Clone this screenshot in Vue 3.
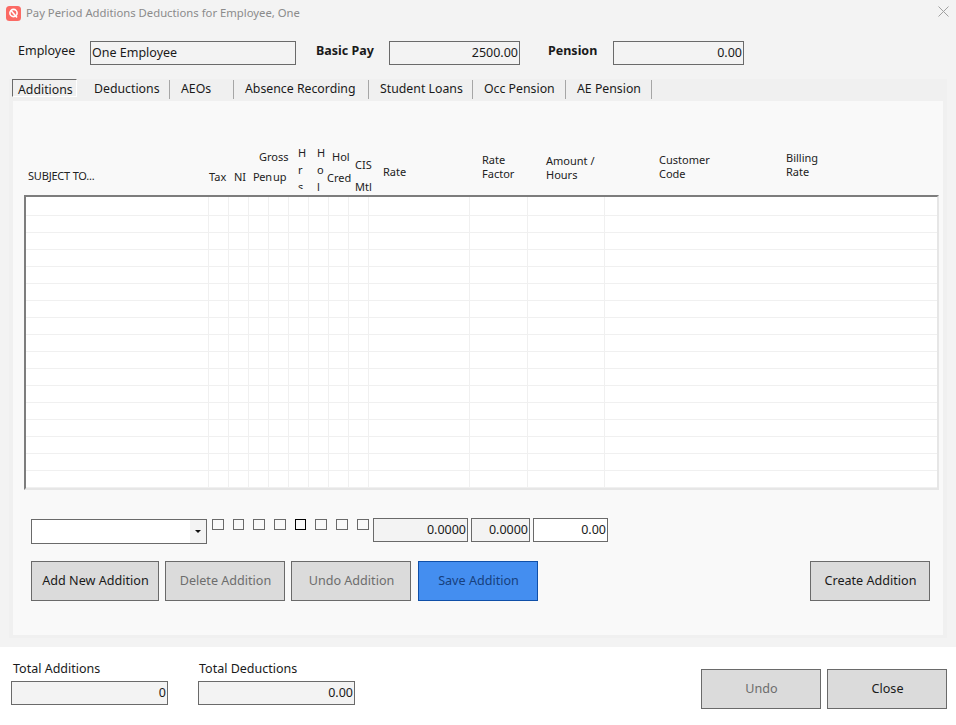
<template>
  <div class="window">
    <div class="upper">
      <div class="titlebar">
        <svg class="logo" viewBox="0 0 15 15" width="15" height="15">
          <rect width="15" height="15" rx="3.5" fill="#fb6a64" />
          <circle cx="7.5" cy="7" r="3.6" fill="none" stroke="#fff" stroke-width="1.6" />
          <path d="M4.8 4.2 L11 11.6" stroke="#fff" stroke-width="1.6" />
        </svg>
        <span class="title">Pay Period Additions Deductions for Employee, One</span>
        <svg class="close-x" viewBox="0 0 11 11" width="11" height="11">
          <path d="M0.5 0.5 L10.5 10.5 M10.5 0.5 L0.5 10.5" stroke="#a0a0a0" stroke-width="1" fill="none" />
        </svg>
      </div>

      <div class="employee-row">
        <label class="lbl-employee">Employee</label>
        <div class="field w-employee left">One Employee</div>
        <label class="lbl-basic">Basic Pay</label>
        <div class="field w-amount">2500.00</div>
        <label class="lbl-pension">Pension</label>
        <div class="field w-amount">0.00</div>
      </div>

      <div class="tab-control">
        <div class="tab-strip">
          <div
            v-for="tab in tabs"
            :key="tab.name"
            class="tab"
            :class="[tab.cls, { active: tab.active }]"
          >
            <span class="tab-text">{{ tab.name }}</span>
          </div>
        </div>

        <div class="tab-page">
          <div class="grid-header">
            <div class="hc h-subject">SUBJECT TO...</div>
            <div class="hc h-tax">Tax</div>
            <div class="hc h-ni">NI</div>
            <div class="hc h-pen">Pen</div>
            <div class="hc h-gross"><span>Gross</span><span>up</span></div>
            <div class="hc h-hrs"><span>H</span><span>r</span><span>s</span></div>
            <div class="hc h-hol"><span>H</span><span>o</span><span>l</span></div>
            <div class="hc h-cred"><span>Hol</span><span>Cred</span></div>
            <div class="hc h-cis"><span>CIS</span><span>Mtl</span></div>
            <div class="hc h-rate">Rate</div>
            <div class="hc h-factor"><span>Rate</span><span>Factor</span></div>
            <div class="hc h-amount"><span>Amount /</span><span>Hours</span></div>
            <div class="hc h-customer"><span>Customer</span><span>Code</span></div>
            <div class="hc h-billing"><span>Billing</span><span>Rate</span></div>
          </div>

          <div class="grid-body">
            <div v-for="r in 18" :key="r" class="grid-row">
              <div v-for="c in 13" :key="c" class="grid-cell"></div>
            </div>
          </div>

          <div class="entry-row">
            <div class="combo">
              <div class="combo-btn"><span class="caret"></span></div>
            </div>
            <div class="checks">
              <span
                v-for="(box, i) in checks"
                :key="i"
                class="check"
                :class="{ focused: box }"
              ></span>
            </div>
            <div class="field w-rate">0.0000</div>
            <div class="field w-factor">0.0000</div>
            <div class="field w-hours white">0.00</div>
          </div>

          <div class="action-row">
            <button class="btn w-add">Add New Addition</button>
            <button class="btn w-del muted">Delete Addition</button>
            <button class="btn w-undo muted">Undo Addition</button>
            <button class="btn w-save primary">Save Addition</button>
            <button class="btn w-create">Create Addition</button>
          </div>
        </div>
      </div>
    </div>

    <div class="footer">
      <div class="total">
        <label>Total Additions</label>
        <div class="field w-total">0</div>
      </div>
      <div class="total second">
        <label>Total Deductions</label>
        <div class="field w-total">0.00</div>
      </div>
      <div class="footer-btns">
        <button class="btn w-foot muted">Undo</button>
        <button class="btn w-foot">Close</button>
      </div>
    </div>
  </div>
</template>

<script setup>
const tabs = [
  { name: 'Additions', cls: 't-add', active: true },
  { name: 'Deductions', cls: 't-ded' },
  { name: 'AEOs', cls: 't-aeo' },
  { name: 'Absence Recording', cls: 't-abs' },
  { name: 'Student Loans', cls: 't-stu' },
  { name: 'Occ Pension', cls: 't-occ' },
  { name: 'AE Pension', cls: 't-ae' }
]

// the fifth box has the keyboard focus
const checks = [false, false, false, false, true, false, false, false]
</script>

<style>
html, body { margin: 0; background: #fff; }
</style>

<style scoped>
.window {
  width: 956px;
  height: 725px;
  overflow: hidden;
  background: #fff;
  font-family: "Noto Sans", "Liberation Sans", sans-serif;
  font-size: 12.5px;
  color: #1a1a1a;
  display: flex;
  flex-direction: column;
}

/* === TOP === */
.upper { height: 647px; background: #f3f3f3; flex-shrink: 0; }

.titlebar {
  height: 27px;
  display: flex;
  align-items: center;
  padding: 0 7px 0 6px;
}
.logo { flex-shrink: 0; margin-right: 5px; margin-top: -1px; }
.title { color: #8b8b8b; font-size: 11.3px; flex: 1; margin-top: -2px; }
.close-x { margin-top: -4px; }

.employee-row {
  height: 24px;
  margin-top: 14px;
  display: flex;
  align-items: flex-start;
  padding-left: 18px;
}
.employee-row label { line-height: 19px; }
.lbl-employee { width: 72px; }
.lbl-basic { font-weight: 700; margin-left: 20px; width: 73px; }
.lbl-pension { font-weight: 700; margin-left: 28px; width: 65px; }

.field {
  box-sizing: border-box;
  height: 24px;
  border: 1px solid #6a6a6a;
  background: #f3f3f3;
  text-align: right;
  line-height: 22px;
  padding: 0 1px;
  white-space: nowrap;
}
.field.left { text-align: left; }
.field.white { background: #fff; }
.w-employee { width: 206px; }
.w-amount { width: 131px; }

/* === TABS === */
.tab-control {
  margin: 14px 9px 0;
  height: 559px;
  background: #f0f0f0;
  padding: 0 4px;
}
.tab-strip {
  height: 22px;
  display: flex;
  align-items: flex-start;
  font-size: 12.3px;
}
.tab {
  box-sizing: border-box;
  height: 19px;
  border-right: 1px solid #a6a6a6;
  margin-top: 1px;
  line-height: 17px;
  padding-left: 11px;
  white-space: nowrap;
}
.tab-text { display: block; }
.tab.active {
  width: 65px;
  margin-left: -1px;
  margin-top: 0;
  height: 18px;
  padding-left: 5px;
  border: 1px solid #fff;
  border-top-color: #6a6a6a;
  border-left-color: #6a6a6a;
  line-height: 19px;
  overflow: hidden;
}
.t-ded { width: 88px; margin-left: 5px; padding-left: 12px; }
.t-aeo { width: 64px; }
.t-abs { width: 135px; }
.t-stu { width: 104px; }
.t-occ { width: 93px; }
.t-ae { width: 86px; }

.tab-page {
  height: 534px;
  background: #f9f9f9;
}

/* === GRID HEADER === */
.grid-header {
  margin: 0 0 0 11px;
  height: 94px;
  display: grid;
  grid-template-columns: 184px repeat(8, 20px) 101px 58px 77px 127px 1fr;
  overflow: hidden;
  font-size: 11px;
  color: #222;
}
.hc {
  display: flex;
  flex-direction: column;
  white-space: nowrap;
  min-width: 0;
  overflow: hidden;
}
.h-subject { padding: 67px 0 0 4px; letter-spacing: -0.2px; }
.h-tax { padding: 68px 0 0 1px; }
.h-ni { padding: 68px 0 0 6px; }
.h-pen { padding: 68px 0 0 5px; overflow: visible; letter-spacing: -0.3px; }
.h-gross { padding: 48px 0 0 0; overflow: visible; line-height: 15px; }
.h-gross span:first-child { margin-left: -9px; }
.h-gross span:last-child { margin-top: 5px; margin-left: 5px; }
/* one letter per line, cut off by the height of the header cell */
.h-hrs, .h-hol { line-height: 17px; align-items: flex-start; box-sizing: border-box; }
.h-hrs { height: 88px; padding: 43px 0 0 10px; clip-path: inset(48px 0 0 0); }
.h-hol { height: 90px; padding: 43px 0 0 9px; }
.h-cred { padding: 48px 0 0 0; overflow: visible; line-height: 15px; }
.h-cred span:first-child { margin-left: 4px; }
.h-cred span:last-child { margin-top: 6px; margin-left: -1px; }
.h-cis { padding: 56px 0 0 7px; overflow: visible; line-height: 15px; }
.h-cis span:last-child { margin-top: 7px; }
.h-rate { padding: 63px 0 0 15px; }
.h-factor { padding: 52px 0 0 13px; line-height: 14px; }
.h-amount { padding: 53px 0 0 19px; line-height: 14px; }
.h-customer { padding: 52px 0 0 55px; line-height: 14px; overflow: visible; }
.h-billing { padding: 50px 0 0 55px; line-height: 14px; }

/* === GRID BODY === */
.grid-body {
  box-sizing: border-box;
  margin-left: 11px;
  width: 915px;
  height: 295px;
  background: #fff;
  border-top: 2px solid #7d7d7d;
  border-left: 2px solid #7d7d7d;
  border-right: 2px solid #e6e6e6;
  border-bottom: 2px solid #e6e6e6;
  overflow: hidden;
}
.grid-row {
  box-sizing: border-box;
  height: 17px;
  display: grid;
  grid-template-columns: 183px repeat(8, 20px) 101px 58px 77px 1fr;
  border-bottom: 1px solid #f0f0f0;
}
.grid-row:first-child { height: 19px; }
.grid-cell { border-right: 1px solid #f0f0f0; }
.grid-cell:last-child { border-right: none; }

/* === ENTRY ROW === */
.entry-row {
  margin: 28px 0 0 18px;
  display: flex;
  align-items: flex-start;
  height: 26px;
}
.combo {
  box-sizing: border-box;
  width: 176px;
  height: 25px;
  margin-top: 1px;
  background: #fff;
  border: 1px solid #6a6a6a;
  display: flex;
  justify-content: flex-end;
}
.combo-btn {
  width: 16px;
  background: #f3f3f3;
  display: flex;
  align-items: center;
  justify-content: center;
}
.caret {
  width: 0;
  height: 0;
  border-left: 3px solid transparent;
  border-right: 3px solid transparent;
  border-top: 3px solid #111;
}
.checks {
  width: 161px;
  margin-left: 5px;
  padding-top: 1px;
  display: flex;
  gap: 9px;
  flex-shrink: 0;
}
.check {
  box-sizing: border-box;
  width: 11.7px;
  height: 11px;
  border: 1px solid #6a6a6a;
  background: #f9f9f9;
  flex-shrink: 0;
}
.check.focused { border-color: #000; }
.w-rate { width: 95px; }
.w-factor { width: 59px; margin-left: 3px; }
.w-hours { width: 75px; margin-left: 3px; }

/* === BUTTONS === */
.action-row {
  margin: 17px 0 0 18px;
  display: flex;
}
.btn {
  box-sizing: border-box;
  height: 40px;
  border: 1px solid #6a6a6a;
  background: #dbdbdb;
  color: #1a1a1a;
  font-family: inherit;
  font-size: 12.6px;
  padding: 0 0 2px 1px;
  flex-shrink: 0;
}
.btn.muted { color: #6d6d6d; }
.btn.primary {
  background: #448ef0;
  border-color: #0f4fa8;
  color: #17407d;
}
.w-add { width: 128px; }
.w-del { width: 120px; margin-left: 6px; }
.w-undo { width: 120px; margin-left: 6px; }
.w-save { width: 120px; margin-left: 7px; }
.w-create { width: 120px; margin-left: 272px; }

/* === FOOTER === */
.footer {
  flex: 1;
  display: flex;
  padding-left: 11px;
  align-items: flex-start;
}
.total { padding-top: 15px; }
.total.second { margin-left: 30px; }
.total label {
  display: block;
  height: 19px;
  line-height: 14px;
  padding-left: 2px;
}
.total.second label { padding-left: 1px; }
.w-total { width: 157px; }
.footer-btns {
  margin-left: auto;
  margin-right: 9px;
  margin-top: 22px;
  display: flex;
  gap: 6px;
}
.w-foot { width: 120px; }
</style>
